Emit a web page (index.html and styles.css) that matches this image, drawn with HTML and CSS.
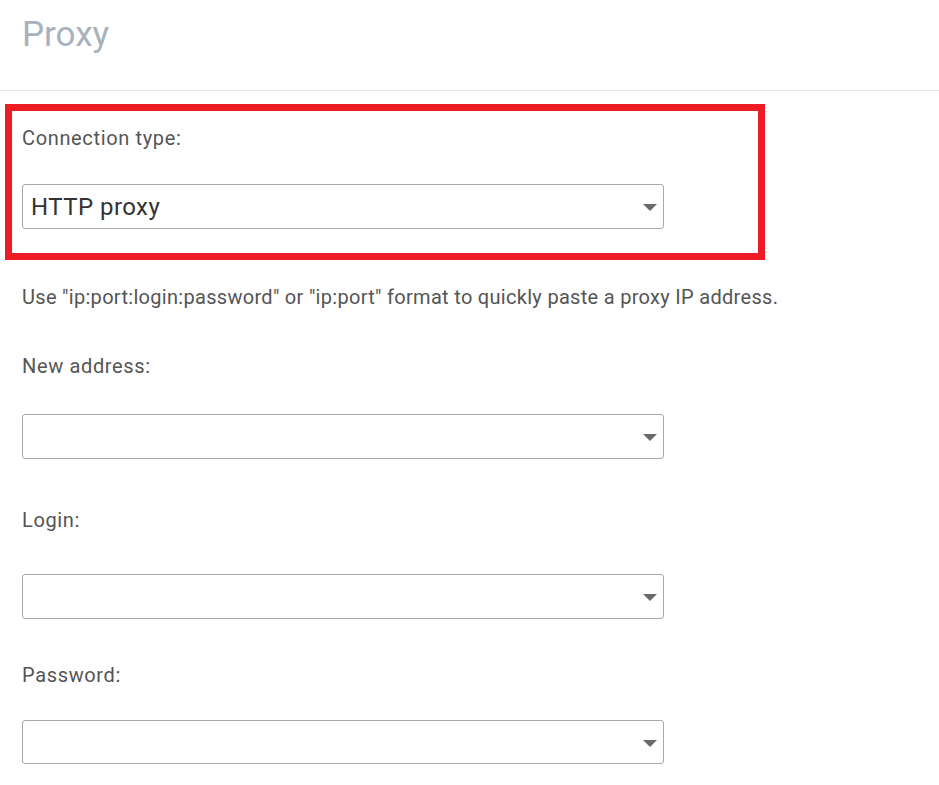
FILE: index.html
```html
<!DOCTYPE html>
<html lang="en">
<head>
<meta charset="utf-8">
<title>Proxy</title>
<link rel="stylesheet" href="styles.css">
</head>
<body>
<header class="header">
  <h1 class="title">Proxy</h1>
</header>
<main class="content">
  <section class="highlight">
    <div class="label">Connection type:</div>
    <div class="select select-first">
      <span class="select-value">HTTP proxy</span>
      <span class="arrow"></span>
    </div>
  </section>
  <p class="help">Use "ip:port:login:password" or "ip:port" format to quickly paste a proxy IP address.</p>
  <div class="field field-address">
    <div class="label">New address:</div>
    <div class="select"><span class="select-value"></span><span class="arrow"></span></div>
  </div>
  <div class="field field-login">
    <div class="label">Login:</div>
    <div class="select"><span class="select-value"></span><span class="arrow"></span></div>
  </div>
  <div class="field field-password">
    <div class="label">Password:</div>
    <div class="select select-last"><span class="select-value"></span><span class="arrow"></span></div>
  </div>
</main>
</body>
</html>
```
FILE: styles.css
```css
* { box-sizing: border-box; }
html, body { margin: 0; padding: 0; background: #ffffff; }
body {
  font-family: Roboto, "Liberation Sans", Arial, sans-serif;
  color: #555555;
  width: 939px;
  height: 785px;
  overflow: hidden;
}
.header {
  height: 91px;
  border-bottom: 1px solid #e4e5ea;
  padding: 13px 0 0 22px;
}
.title {
  margin: 0;
  font-family: Roboto, "Liberation Sans", Arial, sans-serif;
  font-weight: 400;
  font-size: 35px;
  line-height: 44px;
  color: #a9b2bc;
}
.content { padding: 0; }
.highlight {
  margin: 13px 0 0 5px;
  width: 760px;
  border: 7px solid #ee1c25;
  padding: 15px 0 24px 10px;
}
.label {
  font-size: 20px;
  line-height: 24px;
  letter-spacing: 0.65px;
  color: #555555;
}
.select {
  position: relative;
  width: 642px;
  height: 45px;
  border: 1px solid #a8a8a8;
  border-radius: 3px;
  margin-top: 34px;
  display: flex;
  align-items: center;
  padding-left: 8px;
  background: #ffffff;
}
.select-last { height: 44px; }
.select-value {
  font-size: 24px;
  line-height: 30px;
  letter-spacing: 0.45px;
  color: #333333;
}
.arrow {
  position: absolute;
  right: 6px;
  top: 19px;
  width: 0;
  height: 0;
  border-left: 7px solid transparent;
  border-right: 7px solid transparent;
  border-top: 7px solid #6a6a6a;
}
.help {
  margin: 25px 0 0 22px;
  font-size: 20px;
  line-height: 24px;
  letter-spacing: 0.3px;
  color: #555555;
  white-space: nowrap;
}
.field { margin-left: 22px; }
.field-address { margin-top: 45px; }
.field-address .select { margin-top: 36px; }
.field-login { margin-top: 49px; }
.field-login .select { margin-top: 42px; }
.field-password { margin-top: 44px; }
.field-password .select { margin-top: 33px; }
```
